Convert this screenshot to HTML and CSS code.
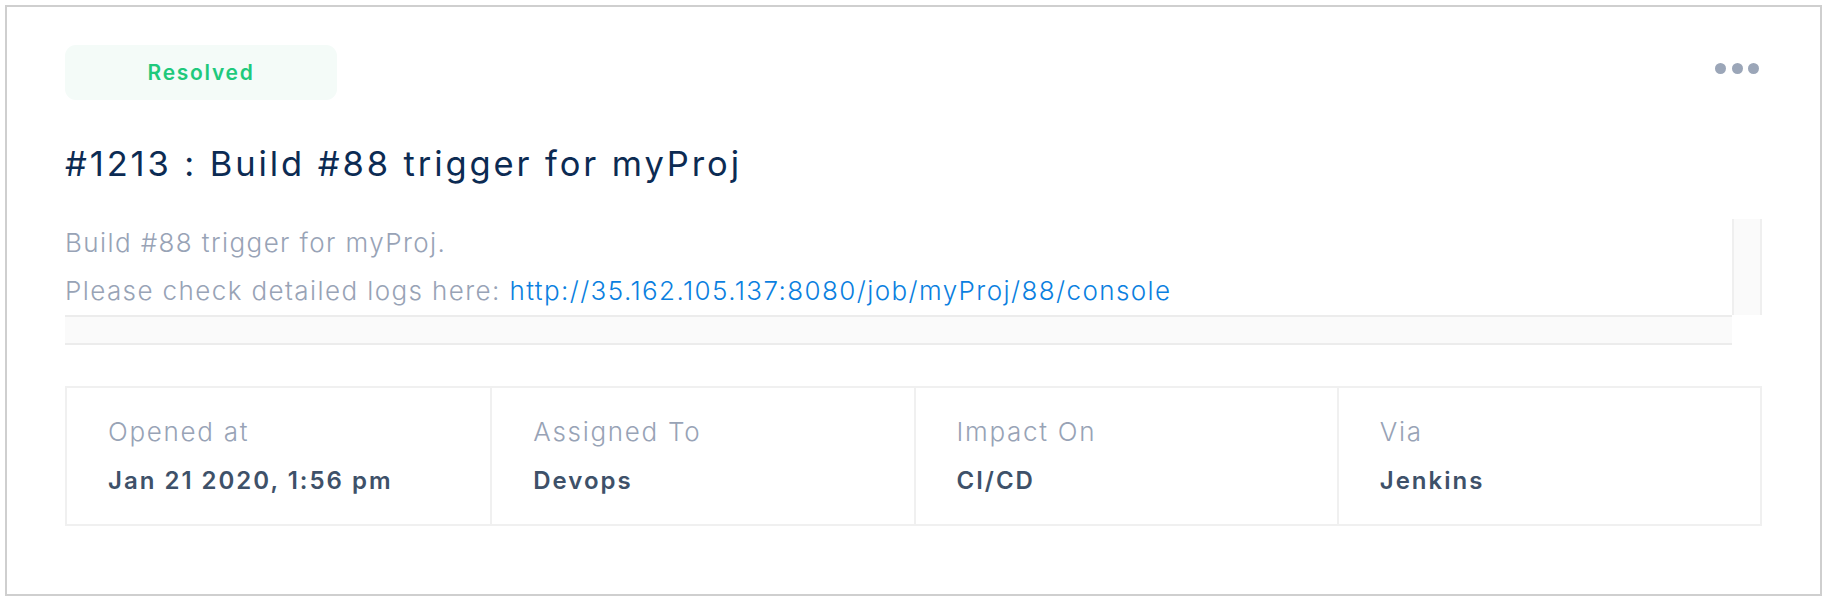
FILE: index.html
```html
<!DOCTYPE html>
<html lang="en">
<head>
<meta charset="utf-8">
<title>Incident #1213</title>
<link rel="stylesheet" href="styles.css">
</head>
<body>
<div class="card">
  <div class="head">
    <span class="badge">Resolved</span>
    <button class="more" type="button" aria-label="More actions"><span></span><span></span><span></span></button>
  </div>
  <h1 class="title">#1213 : Build #88 trigger for myProj</h1>
  <div class="desc">
    <div class="desc-row">
      <div class="desc-body">
        <p>Build #88 trigger for myProj.</p>
        <p>Please check detailed logs here: <a href="#">http://35.162.105.137:8080/job/myProj/88/console</a></p>
      </div>
      <div class="vtrack"></div>
    </div>
    <div class="htrack"></div>
  </div>
  <div class="meta">
    <div class="cell"><div class="label">Opened at</div><div class="value">Jan 21 2020, 1:56 pm</div></div>
    <div class="cell"><div class="label">Assigned To</div><div class="value">Devops</div></div>
    <div class="cell"><div class="label">Impact On</div><div class="value">CI/CD</div></div>
    <div class="cell"><div class="label">Via</div><div class="value">Jenkins</div></div>
  </div>
</div>
</body>
</html>
```
FILE: styles.css
```css
* { box-sizing: border-box; }
html, body { margin: 0; padding: 0; background: #ffffff; }
body { font-family: "Inter", "Lato", "Liberation Sans", sans-serif; }

.card {
  margin: 5px;
  width: 1817px;
  height: 591px;
  border: 2px solid #cfcfcf;
  padding: 38px 58px 0 58px;
  background: #ffffff;
}

.head {
  display: flex;
  justify-content: space-between;
  align-items: flex-start;
}

.badge {
  display: flex;
  align-items: center;
  justify-content: center;
  width: 272px;
  height: 55px;
  border-radius: 11px;
  background: #f4fbf8;
  color: #1fc97c;
  font-size: 21px;
  font-weight: 600;
  letter-spacing: 1.7px;
}

.more {
  display: flex;
  gap: 5.5px;
  margin: 18px 3px 0 0;
  padding: 0;
  border: 0;
  background: transparent;
}
.more span {
  width: 11px;
  height: 11px;
  border-radius: 50%;
  background: #9ba6b8;
}

.title {
  margin: 43px 0 0 0;
  font-size: 34.5px;
  line-height: 42px;
  font-weight: 400;
  letter-spacing: 2.9px;
  color: #0c2b53;
}

.desc { margin-top: 34px; }
.desc-row { display: flex; }
.desc-body {
  flex: 1;
  height: 96px;
  overflow: hidden;
}
.desc-body p {
  margin: 0;
  font-size: 26px;
  line-height: 47.5px;
  font-weight: 300;
  letter-spacing: 1.4px;
  color: #98a3b6;
  white-space: nowrap;
}
.desc-body a { color: #0b7fe0; text-decoration: none; font-weight: 300; }

.vtrack {
  width: 30px;
  height: 96px;
  background: #fafafa;
  border-left: 2px solid #efefef;
  border-right: 2px solid #efefef;
}
.htrack {
  width: calc(100% - 30px);
  height: 30px;
  background: #fafafa;
  border-top: 2px solid #ececec;
  border-bottom: 2px solid #ececec;
}

.meta {
  margin-top: 41px;
  display: grid;
  grid-template-columns: repeat(4, 1fr);
  border: 2px solid #f0f0f0;
}
.cell {
  padding: 28px 20px 28px 41px;
}
.cell + .cell { border-left: 2px solid #f0f0f0; }
.label {
  font-size: 26px;
  line-height: 32px;
  font-weight: 300;
  letter-spacing: 1.7px;
  color: #98a3b6;
}
.value {
  margin-top: 18px;
  font-size: 24px;
  line-height: 30px;
  font-weight: 600;
  letter-spacing: 2px;
  color: #3e5169;
}
```
